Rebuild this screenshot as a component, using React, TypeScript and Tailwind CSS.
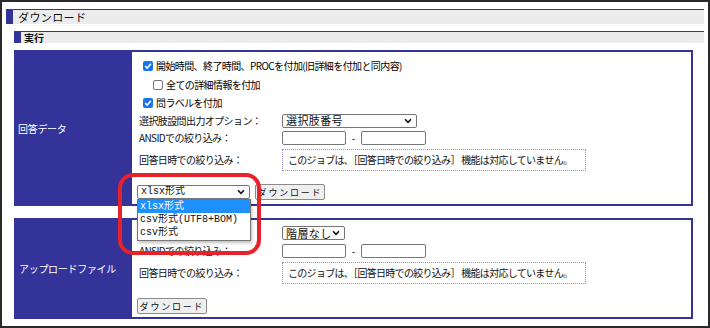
import React from "react";

const Check = ({ checked }: { checked: boolean }) =>
  checked ? (
    <span className="inline-flex w-[10px] h-[10px] rounded-[2px] bg-[#1a73e8] items-center justify-center shrink-0">
      <svg width="8" height="8" viewBox="0 0 8 8">
        <path d="M1.2 4.2 L3.2 6.1 L6.9 1.8" stroke="white" strokeWidth="1.6" fill="none" />
      </svg>
    </span>
  ) : (
    <span className="inline-block w-[10px] h-[10px] rounded-[2px] border border-[#767676] bg-white shrink-0" />
  );

const Chevron = () => (
  <svg width="8" height="6" viewBox="0 0 8 6" className="shrink-0">
    <path d="M1 1.3 L4 4.3 L7 1.3" stroke="#111" strokeWidth="1.6" fill="none" />
  </svg>
);

const Select = ({ text, w, mono }: { text: string; w: string; mono?: boolean }) => (
  <div
    className={`${w} h-[14px] border border-[#767676] rounded-[2px] bg-white flex items-center justify-between pl-[3px] pr-[4px] text-[#111] ${
      mono
        ? "font-['Liberation_Mono','Noto_Sans_CJK_JP',monospace] text-[10px]"
        : "text-[11px] tracking-[0.4px]"
    }`}
  >
    <span className="leading-none whitespace-nowrap">{text}</span>
    <Chevron />
  </div>
);

const Input = ({ w }: { w: string }) => (
  <div className={`${w} h-[14px] border border-[#767676] rounded-[2px] bg-white`} />
);

const Button = () => (
  <div className="w-[70px] h-[16px] border border-[#8a8a8a] rounded-[2px] bg-[#efefef] flex items-center justify-center text-[9px] tracking-[1.8px] text-[#111] leading-none">
    ダウンロード
  </div>
);

const Label = ({ children }: { children?: React.ReactNode }) => (
  <div className="w-[143px] shrink-0 text-[10px] tracking-[-0.6px] text-[#111] leading-none whitespace-nowrap">
    {children}
  </div>
);

const Notice = () => (
  <div className="w-[304px] h-[22px] border border-dotted border-[#8f8fc8] flex items-center pl-[5px] text-[10px] tracking-[-0.7px] text-[#111] whitespace-nowrap leading-none">
    このジョブは、［回答日時での絞り込み］ 機能は対応していません。
  </div>
);

export default function App() {
  return (
    <div className="relative w-[710px] h-[328px] overflow-hidden bg-white border-2 border-[#2a2a2a] font-['Noto_Sans_CJK_JP','Noto_Sans',sans-serif]">
      {/* Title bar */}
      <div className="mt-[7px] ml-[4px] mr-[4px] h-[15px] border-t border-[#333399] bg-[#ececec] flex items-stretch">
        <div className="w-[7px] bg-[#333399]" />
        <div className="ml-[5px] text-[11px] tracking-[0.4px] leading-none flex items-center text-[#111]">
          ダウンロード
        </div>
      </div>

      {/* Sub bar */}
      <div className="mt-[7px] ml-[12px] mr-[4px] h-[12px] border-t border-[#333399] bg-[#ececec] flex items-stretch">
        <div className="w-[7px] bg-[#333399]" />
        <div className="ml-[3px] text-[10px] font-bold leading-none flex items-center text-[#111]">実行</div>
      </div>

      {/* Section 1 */}
      <div className="mt-[7px] ml-[12px] w-[679px] h-[156px] border-2 border-[#333399] flex">
        <div className="w-[116px] bg-[#333399] text-white text-[10px] tracking-[-0.3px] flex items-center pl-[2px]">
          回答データ
        </div>
        <div className="flex-1 flex flex-col bg-white">
          <div className="h-[5px]" />
          <div className="h-[18px] flex items-center pl-[11px] gap-[3px]">
            <Check checked />
            <span className="text-[10px] tracking-[-0.6px] leading-none whitespace-nowrap">
              開始時間、終了時間、PROCを付加(旧詳細を付加と同内容)
            </span>
          </div>
          <div className="h-[20px] flex items-center pl-[21px] gap-[3px]">
            <Check checked={false} />
            <span className="text-[10px] tracking-[-0.6px] leading-none whitespace-nowrap">全ての詳細情報を付加</span>
          </div>
          <div className="h-[16px] flex items-center pl-[11px] gap-[3px]">
            <Check checked />
            <span className="text-[10px] tracking-[-0.6px] leading-none whitespace-nowrap">問ラベルを付加</span>
          </div>
          <div className="h-[19px] flex items-center pl-[7px]">
            <Label>選択肢設問出力オプション：</Label>
            <Select text="選択肢番号" w="w-[135px]" />
          </div>
          <div className="h-[15px] flex items-center pl-[7px]">
            <Label>ANSIDでの絞り込み：</Label>
            <Input w="w-[64px]" />
            <span className="w-[15px] text-center text-[10px] leading-none">-</span>
            <Input w="w-[65px]" />
          </div>
          <div className="mt-[4px] h-[22px] flex items-center pl-[7px]">
            <Label>回答日時での絞り込み：</Label>
            <Notice />
          </div>
          <div className="mt-[13px] h-[16px] flex items-center pl-[5px] gap-[5px]">
            <div className="relative">
              <Select text="xlsx形式" w="w-[113px]" mono />
              {/* open dropdown list */}
              <div className="absolute left-0 top-[14px] w-[114px] h-[42px] border border-[#767676] bg-white shadow-[1px_2px_3px_rgba(0,0,0,0.25)] z-10 flex flex-col font-['Liberation_Mono','Noto_Sans_CJK_JP',monospace] text-[10px] leading-none">
                <div className="h-[13px] bg-[#1e90ff] text-white flex items-center pl-[2px]">xlsx形式</div>
                <div className="h-[13px] text-[#111] flex items-center pl-[2px] whitespace-nowrap">csv形式(UTF8+BOM)</div>
                <div className="h-[13px] text-[#111] flex items-center pl-[2px]">csv形式</div>
              </div>
            </div>
            <Button />
          </div>
        </div>
      </div>

      {/* Section 2 */}
      <div className="mt-[12px] ml-[12px] w-[679px] h-[101px] border-2 border-[#333399] flex">
        <div className="w-[116px] bg-[#333399] text-white text-[10px] tracking-[-0.3px] flex items-center pl-[3px]">
          アップロードファイル
        </div>
        <div className="flex-1 flex flex-col bg-white">
          <div className="mt-[6px] h-[14px] flex items-center pl-[7px]">
            <Label />
            <Select text="階層なし" w="w-[63px]" />
          </div>
          <div className="mt-[4px] h-[14px] flex items-center pl-[7px]">
            <Label>ANSIDでの絞り込み：</Label>
            <Input w="w-[64px]" />
            <span className="w-[15px] text-center text-[10px] leading-none">-</span>
            <Input w="w-[65px]" />
          </div>
          <div className="mt-[4px] h-[22px] flex items-center pl-[7px]">
            <Label>回答日時での絞り込み：</Label>
            <Notice />
          </div>
          <div className="mt-[14px] h-[16px] flex items-center pl-[5px]">
            <Button />
          </div>
        </div>
      </div>

      {/* Red highlight */}
      <div className="absolute left-[116px] top-[171px] w-[143px] h-[82px] border-[4px] border-[#e8222a] rounded-[15px] z-20 pointer-events-none" />
    </div>
  );
}
